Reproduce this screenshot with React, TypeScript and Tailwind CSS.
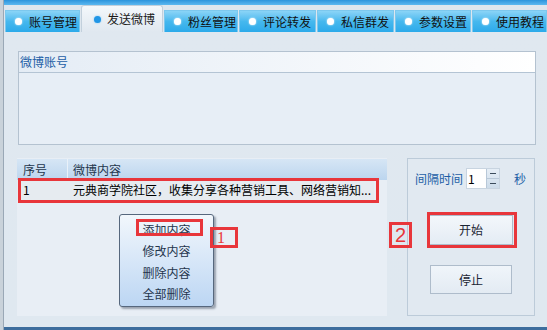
import React from 'react';

const tabs = [
  { label: '账号管理', w: 75 },
  { label: '发送微博', w: 82, active: true },
  { label: '粉丝管理', w: 74 },
  { label: '评论转发', w: 77 },
  { label: '私信群发', w: 77 },
  { label: '参数设置', w: 76 },
  { label: '使用教程', w: 75 },
];

const menuItems = ['添加内容', '修改内容', '删除内容', '全部删除'];

function Tab({ label, w, active }: { label: string; w: number; active?: boolean }) {
  if (active) {
    return (
      <div
        className="h-[27px] flex items-center pl-[12px] gap-[6px] bg-gradient-to-b from-[#f4f8fb] to-[#e0e8f0] border border-b-0 border-[#c2d0dc] rounded-t-[3px] z-10"
        style={{ width: w }}
      >
        <span className="w-[7px] h-[7px] rounded-full bg-[#2196e6] shadow-[0_0_2px_#7cc4f4]" />
        <span className="text-[12px] text-[#1b1b1b] leading-none">{label}</span>
      </div>
    );
  }
  return (
    <div
      className="h-[22px] flex items-center pl-[9px] gap-[7px] bg-gradient-to-b from-[#8ad4f7] via-[#45b8ee] to-[#2caaea] border border-[#7cc8ee] border-b-0"
      style={{ width: w }}
    >
      <span className="w-[7px] h-[7px] rounded-full bg-white shadow-[0_0_2px_#ffffff]" />
      <span className="text-[12px] text-[#111] leading-none">{label}</span>
    </div>
  );
}

export default function App() {
  return (
    <div
      className="relative w-[547px] h-[330px] overflow-hidden bg-[#dee7ef] flex"
      style={{ fontFamily: '"Noto Sans CJK SC", "Noto Sans", sans-serif' }}
    >
      {/* left edge of window behind */}
      <div className="w-[4px] h-full bg-[#c9d2da] border-r border-[#9aa8b6]" />

      <div className="flex-1 flex flex-col">
        {/* tab strip */}
        <div className="h-[32px] flex flex-col bg-[#dde6ee]">
          <div className="h-[6px] bg-gradient-to-b from-[#2a94dc] to-[#5ab8f0]" />
          <div className="flex-1 flex items-end gap-[1px] pl-[1px]">
            {tabs.map((t) => (
              <Tab key={t.label} {...t} />
            ))}
          </div>
        </div>

        {/* content */}
        <div className="flex-1 flex flex-col pl-[14px] pr-[11px] pt-[19px] bg-gradient-to-b from-[#e0e8f0] to-[#dfe8f0]">
          {/* account group */}
          <div className="h-[94px] border border-[#b4c2d0] bg-[#e7eef6] flex flex-col">
            <div className="h-[21px] border-b border-[#b4c4d4] bg-gradient-to-r from-[#e4ecf5] to-[#ffffff] flex items-center pl-[1px]">
              <span className="text-[12px] text-[#1c5ea6] leading-none">微博账号</span>
            </div>
          </div>

          {/* bottom row */}
          <div className="mt-[13px] flex h-[158px]">
            {/* table */}
            <div className="w-[370px] -ml-[1px] bg-[#e8eef5] pt-[1px] flex flex-col">
              <div className="h-[21px] flex bg-gradient-to-b from-[#d6e6f5] to-[#bcd5ee]">
                <div className="w-[51px] border-r border-[#e9f1f9] flex items-center pl-[6px]">
                  <span className="text-[12px] text-[#23364d] leading-none">序号</span>
                </div>
                <div className="flex-1 flex items-center pl-[5px]">
                  <span className="text-[12px] text-[#23364d] leading-none">微博内容</span>
                </div>
              </div>
              <div className="h-[20px] flex items-center bg-[#e6ebf0] w-[357px]">
                <div className="w-[51px] shrink-0 pl-[6px] text-[12px] text-black leading-none">1</div>
                <div className="pl-[5px] text-[12px] text-black leading-none whitespace-nowrap">
                  元典商学院社区，收集分享各种营销工具、网络营销知...
                </div>
              </div>
            </div>

            {/* settings group */}
            <div className="ml-[20px] w-[128px] border border-[#bccbd9] bg-[#e1e9f1] flex flex-col items-center">
              <div className="mt-[9px] flex items-center h-[21px] w-full pl-[7px]">
                <span className="text-[12px] text-[#1c5ea6] leading-none">间隔时间</span>
                <div className="ml-[3px] h-[21px] w-[34px] flex bg-white border border-[#c8d4e0]">
                  <div className="flex-1 text-[12px] leading-[19px] pl-[1px] text-black">1</div>
                  <div className="w-[13px] flex flex-col bg-gradient-to-b from-[#e6eef6] to-[#cddcea] border-l border-[#b8c8d8]">
                    <div className="flex-1 flex items-center justify-center border-b border-[#b8c8d8]">
                      <span className="w-[6px] h-[1px] bg-[#3c4c5c]" />
                    </div>
                    <div className="flex-1 flex items-center justify-center">
                      <span className="w-[6px] h-[1px] bg-[#3c4c5c]" />
                    </div>
                  </div>
                </div>
                <span className="ml-[14px] text-[12px] text-[#1c5ea6] leading-none">秒</span>
              </div>
              <button className="mt-[26px] w-[84px] h-[30px] bg-gradient-to-b from-[#f3f7fb] to-[#e4ecf4] border border-[#aebccb] text-[12px] text-[#1b2533]">
                开始
              </button>
              <button className="mt-[20px] w-[82px] h-[29px] bg-gradient-to-b from-[#f0f5fa] to-[#e3ebf3] border border-[#aebccb] text-[12px] text-[#1b2533]">
                停止
              </button>
            </div>
          </div>
        </div>

        <div className="h-[3px] bg-[#3d6d9d]" />
      </div>

      {/* context menu */}
      <div className="absolute left-[119px] top-[214px] w-[95px] h-[93px] rounded-[3px] border border-[#56677d] bg-gradient-to-b from-[#f2f7fc] to-[#bcd6f3] shadow-[2px_2px_2px_rgba(60,70,90,0.45)] flex flex-col items-center pt-[4px]">
        {menuItems.map((m) => (
          <div key={m} className="h-[21.5px] flex items-center text-[12px] text-[#25354c] leading-none">
            {m}
          </div>
        ))}
      </div>

      {/* annotations */}
      <div className="absolute left-[18px] top-[178px] w-[361px] h-[25px] border-[3px] border-[#e8363b]" />
      <div className="absolute left-[136px] top-[219px] w-[67px] h-[17px] border-[3px] border-[#e8363b]" />
      <div className="absolute left-[210px] top-[227px] w-[28px] h-[21px] border-[3px] border-[#e8363b] flex items-center pl-[4px]">
        <span className="text-[16px] text-[#e8363b] leading-none" style={{ fontFamily: '"Liberation Serif", serif' }}>1</span>
      </div>
      <div className="absolute left-[389px] top-[222px] w-[23px] h-[26px] border-[3px] border-[#e8363b] flex items-center justify-center">
        <span className="text-[20px] text-[#e8363b] leading-none" style={{ fontFamily: '"Liberation Sans", sans-serif' }}>2</span>
      </div>
      <div className="absolute left-[427px] top-[212px] w-[90px] h-[36px] border-[3px] border-[#e8363b]" />
    </div>
  );
}
